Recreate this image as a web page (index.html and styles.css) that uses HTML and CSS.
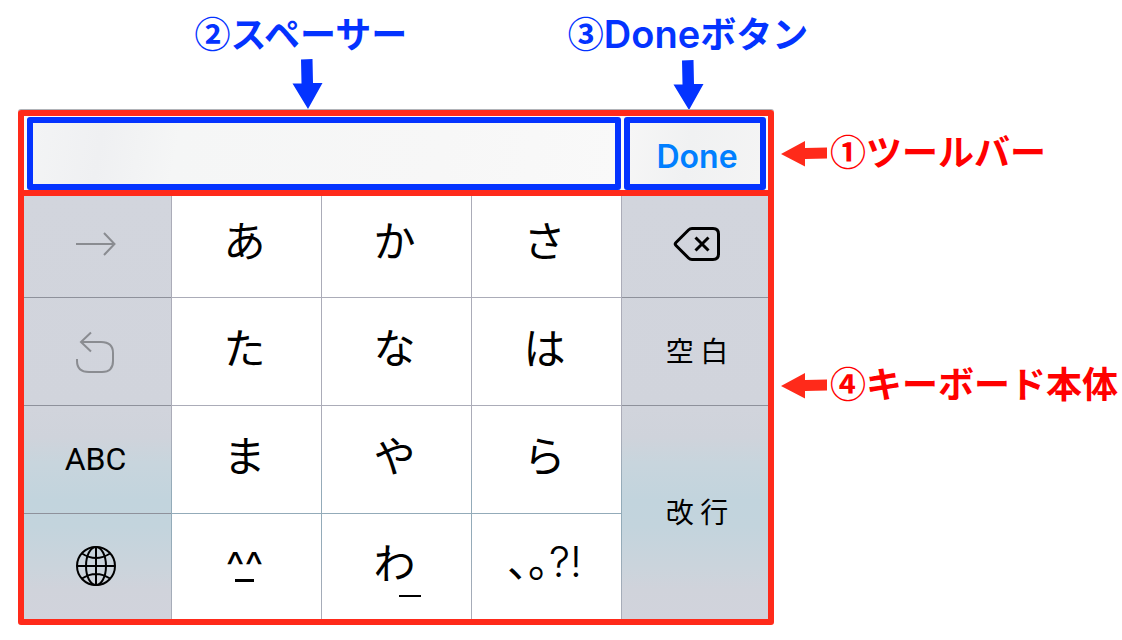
FILE: index.html
```html
<!DOCTYPE html>
<html lang="ja">
<head>
<meta charset="utf-8">
<meta name="viewport" content="width=device-width, initial-scale=1">
<title>キーボードのツールバー</title>
<link rel="stylesheet" href="styles.css">
</head>
<body>
<main class="diagram">
  <header class="top-notes">
    <div class="note-down note-spacer">
      <span class="note-text">②スペーサー</span>
      <svg class="arrow-down" viewBox="0 0 31 50" aria-hidden="true"><path d="M9 .5 20.500 0 21 24H30.500L16 50 .5 24.500H9.500Z"/></svg>
    </div>
    <div class="note-down note-done">
      <span class="note-text">③<span class="latin">Done</span>ボタン</span>
      <svg class="arrow-down" viewBox="0 0 31 50" aria-hidden="true"><path d="M9 .5 20.500 0 21 24H30.500L16 50 .5 24.500H9.500Z"/></svg>
    </div>
  </header>

  <section class="device">
    <div class="toolbar">
      <div class="spacer"></div>
      <button class="done" type="button">Done</button>
    </div>
    <div class="keyboard">
      <div class="side">
        <button class="key key-top" type="button" aria-label="次へ">
          <svg class="icon faint" width="42" height="26" viewBox="0 0 42 26"><path d="M1 13H39M29 2 39.500 13 29 24"/></svg>
        </button>
        <button class="key" type="button" aria-label="戻す">
          <svg class="icon faint" width="42" height="44" viewBox="0 0 42 44"><path d="M2 29V31Q2 42 14 42H27Q38 42 38 31V23Q38 12 26 12H6M16 2.500 6 12 16 21.500"/></svg>
        </button>
        <button class="key key-abc" type="button">ABC</button>
        <button class="key key-globe" type="button" aria-label="言語">
          <svg class="icon" width="42" height="42" viewBox="0 0 42 42"><circle cx="21" cy="21" r="19"/><ellipse cx="21" cy="21" rx="10" ry="19"/><path d="M21 2V40M2 21H40M7 8.500Q21 17.500 35 8.500M7 33.500Q21 24.500 35 33.500"/></svg>
        </button>
      </div>
      <div class="kana">
        <button class="key key-top" type="button">あ</button>
        <button class="key key-top" type="button">か</button>
        <button class="key key-top" type="button">さ</button>
        <button class="key" type="button">た</button>
        <button class="key" type="button">な</button>
        <button class="key" type="button">は</button>
        <button class="key" type="button">ま</button>
        <button class="key" type="button">や</button>
        <button class="key" type="button">ら</button>
        <button class="key" type="button"><span class="face">^^</span></button>
        <button class="key" type="button"><span class="wa">わ</span></button>
        <button class="key" type="button"><span class="punct">、。<span class="marks">?!</span></span></button>
      </div>
      <div class="side side-right">
        <button class="key key-top" type="button" aria-label="削除">
          <svg class="icon delete" width="48" height="36" viewBox="0 0 48 36"><path d="M19 2.500H40Q45.500 2.500 45.500 8V28Q45.500 33.500 40 33.500H19Q17 33.500 15.500 32L3 19.500Q1.500 18 3 16.500L15.500 4Q17 2.500 19 2.500ZM22.500 11.500 35.500 24.500M35.500 11.500 22.500 24.500"/></svg>
        </button>
        <button class="key key-word" type="button">空 白</button>
        <button class="key key-word key-return" type="button">改 行</button>
      </div>
    </div>
  </section>

  <aside class="side-notes">
    <div class="note-left">
      <svg class="arrow-left" viewBox="0 0 46 26" aria-hidden="true"><path d="M0 13 24 0V7L46 6.500V17.500L24 18V25.500Z"/></svg>
      <span class="note-text">①ツールバー</span>
    </div>
    <div class="note-left">
      <svg class="arrow-left" viewBox="0 0 46 26" aria-hidden="true"><path d="M0 13 24 0V7L46 6.500V17.500L24 18V25.500Z"/></svg>
      <span class="note-text">④キーボード本体</span>
    </div>
  </aside>
</main>
</body>
</html>
```

FILE: styles.css
```css
* {
  box-sizing: border-box;
}

body {
  margin: 0;
  background: #fff;
  color: #000;
  font-family: "Noto Sans CJK JP", sans-serif;
}

.diagram {
  display: grid;
  grid-template-columns: minmax(0, 756fr) minmax(0, 348fr);
  padding: 12px 0 15px 18px;
}

/* Notes above the device */
.top-notes {
  grid-column: 1 / -1;
  display: grid;
  grid-template-columns: 578fr 184fr 342fr;
}

.note-down {
  display: flex;
  flex-direction: column;
  align-items: center;
  gap: 7px;
  min-width: 0;
  color: #0433ff;
}

.note-text {
  font-size: 36px;
  font-weight: 700;
  line-height: 40px;
  white-space: nowrap;
}

.note-spacer .note-text {
  padding-right: 12px;
}

.latin {
  font-family: Inter, sans-serif;
  font-size: 38px;
  font-weight: 600;
  line-height: 1;
}

.arrow-down {
  width: 31px;
  height: 50px;
  fill: #0433ff;
}

/* Device */
.device {
  border: 6px solid #ff2a1a;
  border-radius: 3px;
  box-shadow: 0 -1px 0 #b0b3b8;
}

.toolbar {
  display: grid;
  grid-template-columns: 594fr 142fr;
  gap: 3px;
  padding: 1px 2px 0 3px;
  border-bottom: 6px solid #ff2a1a;
  background: #fafafa;
}

.spacer,
.done {
  min-height: 73px;
  border: 6px solid #0433ff;
  border-radius: 3px;
}

.spacer {
  background: linear-gradient(100deg, #f3f4f5, #eff0f2 12%, #f5f6f6 25%, #f7f7f7 70%, #f9f9f9);
}

.done {
  padding: 6px 0 0 4px;
  background: linear-gradient(100deg, #f6f6f6, #f0f1f2 45%, #f4f4f4);
  color: #007fff;
  font-family: Inter, sans-serif;
  font-size: 32px;
  font-weight: 600;
  line-height: 40px;
}

.keyboard {
  display: grid;
  grid-template-columns: 147fr 449fr 146fr;
  gap: 1px;
  background: linear-gradient(#abacb8 55%, #93abb9 70%, #93abb9 80%, #abacb8);
}

.side {
  display: grid;
  grid-template-rows: 102px 108px 108px 105px;
  background: linear-gradient(#d2d5dd 0%, #d1d4dc 50%, #cfd3db 57%, #c8d5dd 63%, #c2d4dd 72%, #c3d4dd 78%, #cbd4dc 88%, #d0d3db 93%, #d1d3dc 100%);
}

.side .key {
  border-bottom: 1px solid #8e919b;
}

.side .key:last-child {
  border-bottom: 0;
}

.kana {
  display: grid;
  grid-template-columns: repeat(3, 1fr);
  grid-template-rows: 101px 107px 107px 105px;
  gap: 1px;
}

.key {
  display: flex;
  align-items: center;
  justify-content: center;
  min-width: 0;
  padding: 0 4px 0 0;
  border: 0;
  background: none;
  color: #000;
  font-family: "Noto Sans CJK JP", sans-serif;
  font-size: 42px;
  font-weight: 400;
  line-height: 48px;
}

.kana .key {
  padding: 0 4px 12px 0;
  background: #fff;
}

.side .key-abc {
  padding-bottom: 2px;
  font-family: Roboto, sans-serif;
  font-size: 32px;
}

.side .key-globe {
  padding-bottom: 2px;
}

.side-right .key {
  padding: 0 0 4px 4px;
}

.side .key-top {
  padding-bottom: 6px;
}

.kana .key-top {
  padding-bottom: 16px;
}

.side .key-word {
  font-size: 28px;
  font-weight: 400;
}

.key-return {
  grid-row: 3 / 5;
}

.icon {
  fill: none;
  stroke: #000;
  stroke-width: 2;
}

.faint {
  stroke: #8a8c91;
}

.delete {
  stroke-width: 3;
}

.face,
.wa {
  position: relative;
}

.face {
  padding: 10px 0 0 0;
  font-family: Inter, sans-serif;
  font-size: 40px;
}

.face::after,
.wa::after {
  content: "";
  position: absolute;
  background: #000;
}

.face::after {
  right: 9px;
  bottom: 8px;
  width: 19px;
  height: 3px;
}

.wa::after {
  right: -5px;
  bottom: -12px;
  width: 22px;
  height: 2px;
}

.punct {
  font-feature-settings: "halt";
}

.marks {
  font-family: Inter, sans-serif;
  font-weight: 300;
}

/* Notes beside the device */
.side-notes {
  display: flex;
  flex-direction: column;
  gap: 184px;
  padding: 20px 0 0 7px;
}

.note-left {
  display: flex;
  align-items: center;
  gap: 3px;
  color: #f00;
}

.note-left .note-text {
  padding-bottom: 8px;
}

.arrow-left {
  flex: none;
  width: 46px;
  height: 26px;
  fill: #ff2a1a;
}
```
